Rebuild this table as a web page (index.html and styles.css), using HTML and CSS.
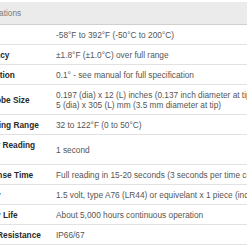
FILE: index.html
```html
<!DOCTYPE html>
<html lang="en">
<head>
<meta charset="utf-8">
<title>Specifications</title>
<link rel="stylesheet" href="styles.css">
</head>
<body>
<div class="crop">
  <table class="specs">
    <thead>
      <tr><th colspan="2">Specifications</th></tr>
    </thead>
    <tbody>
      <tr><td class="label">Range</td><td class="value">-58°F to 392°F (-50°C to 200°C)</td></tr>
      <tr><td class="label">Accuracy</td><td class="value">±1.8°F (±1.0°C) over full range</td></tr>
      <tr><td class="label">Resolution</td><td class="value">0.1° - see manual for full specification</td></tr>
      <tr><td class="label">Pin Probe Size</td><td class="value">0.197 (dia) x 12 (L) inches (0.137 inch diameter at tip)<br>5 (dia) x 305 (L) mm (3.5 mm diameter at tip)</td></tr>
      <tr><td class="label">Operating Range</td><td class="value">32 to 122°F (0 to 50°C)</td></tr>
      <tr><td class="label">Sensor Reading Time</td><td class="value">1 second</td></tr>
      <tr><td class="label">Response Time</td><td class="value">Full reading in 15-20 seconds (3 seconds per time constant)</td></tr>
      <tr><td class="label">Battery</td><td class="value">1.5 volt, type A76 (LR44) or equivelant x 1 piece (included)</td></tr>
      <tr><td class="label">Battery Life</td><td class="value">About 5,000 hours continuous operation</td></tr>
      <tr><td class="label">Water Resistance</td><td class="value">IP66/67</td></tr>
    </tbody>
  </table>
</div>
</body>
</html>
```
FILE: styles.css
```css
html, body {
  margin: 0;
  padding: 0;
  background: #ffffff;
  overflow: hidden;
}

.crop {
  margin-left: -38px;
  padding-top: 2px;
  width: 520px;
}

.specs {
  border-collapse: collapse;
  width: 100%;
  font-family: "Liberation Sans", Arial, sans-serif;
  font-size: 8.3px;
  line-height: 10px;
}

.specs th {
  background: #ebebeb;
  color: #7a7a7a;
  font-weight: normal;
  text-align: left;
  height: 22px;
  padding: 0 0 0 8px;
  border-bottom: 1px solid #cfcfcf;
  vertical-align: middle;
}

.specs td {
  border-bottom: 1px solid #e2e2e2;
  padding: 5px 0 4px 0;
  vertical-align: middle;
}

.specs .label {
  width: 76px;
  padding-left: 10px;
  font-weight: bold;
  color: #2a2a2a;
}

.specs .value {
  padding-left: 8px;
  color: #555555;
  white-space: nowrap;
}
```
